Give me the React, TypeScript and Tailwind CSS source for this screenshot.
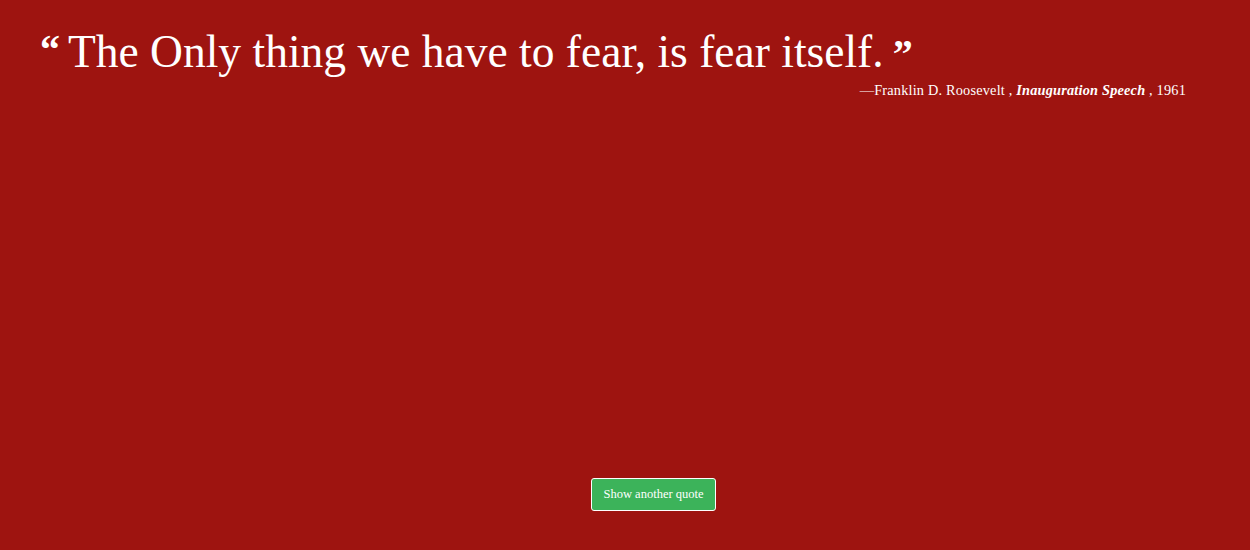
export default function App() {
  return (
    <div className="flex h-[550px] w-full flex-col bg-[#9e1410] text-white" style={{ fontFamily: '"Liberation Serif", serif' }}>
      <div className="pl-[40px] pr-[64px] pt-[26px]">
        <blockquote className="m-0 flex items-start">
          <span className="mr-[8px] mt-[4px] text-[40px] font-bold leading-none">&ldquo;</span>
          <span className="text-[45.5px] leading-[52px]">The Only thing we have to fear, is fear itself.</span>
          <span className="ml-[9px] mt-[8px] text-[40px] font-bold leading-none">&rdquo;</span>
        </blockquote>
        <p className="mt-[2px] text-right text-[14.3px] tracking-[0.2px]">
          &mdash;Franklin D. Roosevelt , <em className="font-semibold italic">Inauguration Speech</em> , 1961
        </p>
      </div>
      <div className="mt-auto mb-[39px] flex justify-center pl-[57px]">
        <button className="h-[33px] w-[125px] whitespace-nowrap rounded-[3px] border border-white bg-[#3cb35a] text-[12.5px] text-white">
          Show another quote
        </button>
      </div>
    </div>
  );
}
